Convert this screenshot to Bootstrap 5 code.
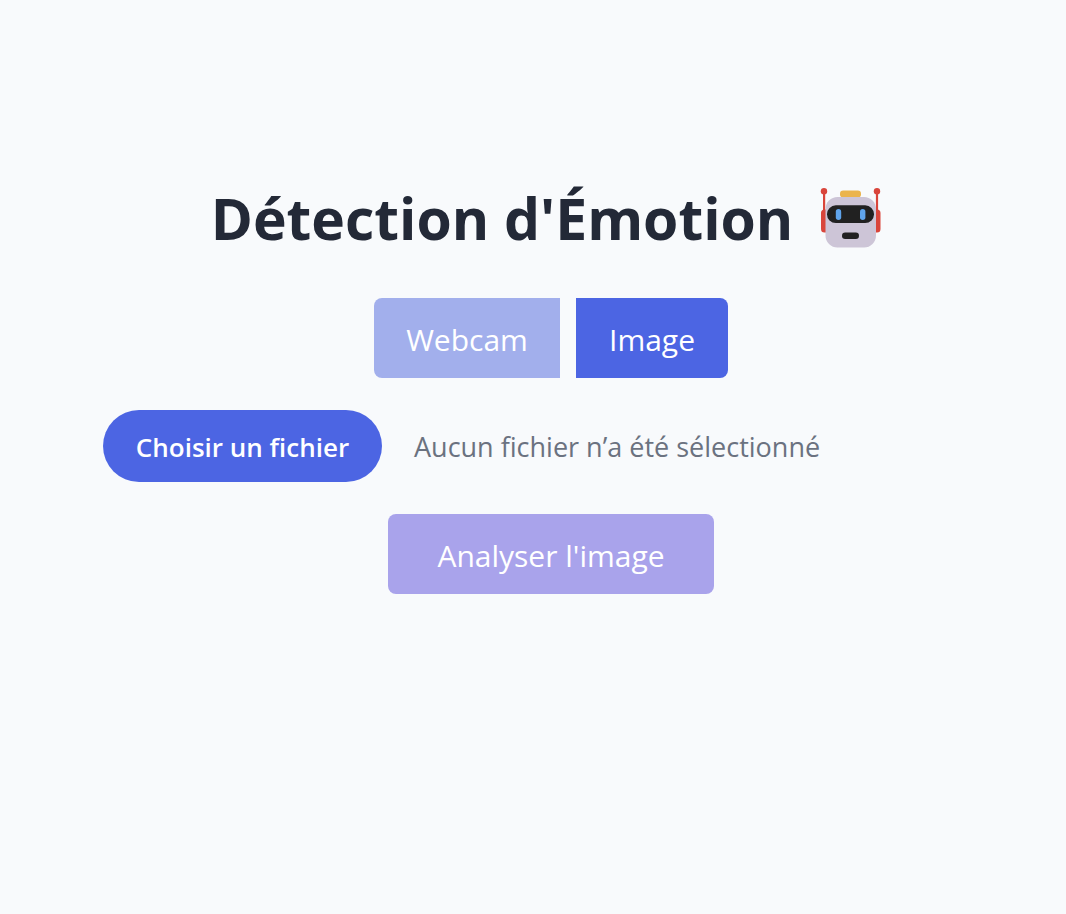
<!DOCTYPE html>
<html lang="fr">
<head>
<meta charset="utf-8">
<meta name="viewport" content="width=device-width, initial-scale=1">
<title>Détection d'Émotion</title>
<link href="https://cdn.jsdelivr.net/npm/bootstrap@5.3.0/dist/css/bootstrap.min.css" rel="stylesheet">
<style>
  body { background: #f8fafc; font-family: "Segoe UI", "Open Sans", "Noto Sans", sans-serif; }
  .page { padding: 182px 0 32px 36px; gap: 32px; }
  .title { font-size: 57px; line-height: 72px; font-weight: 700; color: #232937; gap: 24px; margin-bottom: 12px; padding-right: 6px; }
  .robot { width: 68px; height: 68px; }
  .action { height: 80px; padding: 4px 30px 0; border: 0; border-radius: 8px; font-size: 30px; line-height: 48px; color: #fff; }
  .action:disabled { color: #fff; opacity: 1; }
  .tab-webcam { background: #a2afec; min-width: 186px; border-radius: 8px 0 0 8px; }
  .tab-image { background: #4c65e3; min-width: 152px; border-radius: 0 8px 8px 0; }
  .tab-webcam:hover, .tab-image:hover, .pick:hover { background: #4056cf; color: #fff; }
  .analyse, .analyse:disabled { background: #a9a3eb; min-width: 326px; }
  .picker { width: 100%; max-width: 896px; gap: 32px; font-size: 27px; line-height: 40px; color: #6b7280; }
  .picker label { padding-top: 2px; }
  .pick { height: 72px; min-width: 279px; padding: 2px 30px 0; border: 0; background: #4c65e3; color: #fff; font-size: 26px; line-height: 40px; font-weight: 600; }
</style>
</head>
<body>
<main class="page min-vh-100 d-flex flex-column align-items-center">
  <h1 class="title d-flex align-items-center">
    <span>Détection d'Émotion</span>
    <svg class="robot flex-shrink-0" viewBox="0 2 68 68" role="img" aria-label="Robot">
      <g fill="#d9453b">
        <circle cx="7" cy="9.3" r="3.2"/><circle cx="60" cy="9.3" r="3.2"/>
        <path d="M6 10h2.2v21H6zM58.900 10h2.200v21h-2.200z"/>
        <path d="M9 27.500H7.500a3.500 3.500 0 0 0-3.500 3.500v16a3.500 3.500 0 0 0 3.500 3.500H9zM58 27.500h2a3.500 3.500 0 0 1 3.500 3.500v16a3.500 3.500 0 0 1-3.500 3.500h-2z"/>
      </g>
      <rect x="23" y="8.500" width="21" height="7" rx="3.200" fill="#ebb44d"/>
      <rect x="8.500" y="15" width="50.500" height="50.500" rx="12" fill="#cdc5d7"/>
      <rect x="10" y="23.300" width="47" height="17.700" rx="8.800" fill="#212121"/>
      <rect x="18.800" y="27" width="5.400" height="11" rx="2.700" fill="#5fa4ec"/>
      <rect x="43" y="27" width="5.400" height="11" rx="2.700" fill="#5fa4ec"/>
      <rect x="25" y="50.500" width="17" height="6.500" rx="3.200" fill="#212121"/>
    </svg>
  </h1>
  <div class="d-flex gap-3" role="group" aria-label="Source">
    <button type="button" class="btn action tab-webcam">Webcam</button>
    <button type="button" class="btn action tab-image" aria-pressed="true">Image</button>
  </div>
  <div class="picker d-flex flex-wrap align-items-center">
    <button type="button" class="btn rounded-pill pick" id="pick">Choisir un fichier</button>
    <label for="file" id="fileName">Aucun fichier n’a été sélectionné</label>
    <input type="file" id="file" accept="image/*" class="d-none">
  </div>
  <button type="button" class="btn action analyse" id="analyse" disabled>Analyser l'image</button>
</main>
<script src="https://cdn.jsdelivr.net/npm/bootstrap@5.3.0/dist/js/bootstrap.bundle.min.js"></script>
<script>
  const file = document.getElementById('file');
  document.getElementById('pick').addEventListener('click', () => file.click());
  file.addEventListener('change', () => {
    if (file.files.length) document.getElementById('fileName').textContent = file.files[0].name;
    document.getElementById('analyse').disabled = !file.files.length;
  });
</script>
</body>
</html>
